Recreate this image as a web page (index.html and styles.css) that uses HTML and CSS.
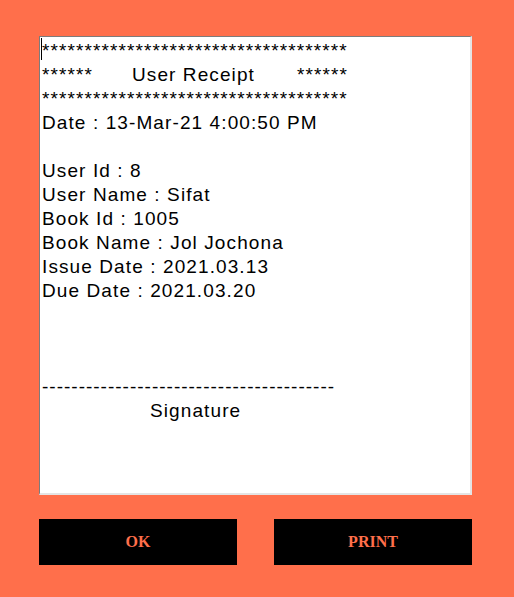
FILE: index.html
```html
<!DOCTYPE html>
<html>
<head>
<meta charset="utf-8">
<link rel="stylesheet" href="styles.css">
</head>
<body>
<div class="window">
  <div class="receipt">
    <span class="caret"></span>
    <div class="line">************************************</div>
    <div class="line"><span>******</span><span class="title">User Receipt</span><span class="right">******</span></div>
    <div class="line">************************************</div>
    <div class="line">Date : 13-Mar-21 4:00:50 PM</div>
    <div class="line"> </div>
    <div class="line">User Id : 8</div>
    <div class="line">User Name : Sifat</div>
    <div class="line">Book Id : 1005</div>
    <div class="line">Book Name : Jol Jochona</div>
    <div class="line">Issue Date : 2021.03.13</div>
    <div class="line">Due Date : 2021.03.20</div>
    <div class="line"> </div>
    <div class="line"> </div>
    <div class="line"> </div>
    <div class="line dash">----------------------------------------</div>
    <div class="line sig">Signature</div>
  </div>
  <div class="buttons">
    <button class="btn">OK</button>
    <button class="btn">PRINT</button>
  </div>
</div>
</body>
</html>
```
FILE: styles.css
```css
html, body {
  margin: 0;
  padding: 0;
  background: #ff6f4b;
}
.window {
  width: 514px;
  height: 597px;
  box-sizing: border-box;
  padding: 36px 42px 0 39px;
  display: flex;
  flex-direction: column;
}
.receipt {
  position: relative;
  width: 433px;
  height: 459px;
  box-sizing: border-box;
  background: #fff;
  border-style: solid;
  border-width: 1px 2px 2px 1px;
  border-color: #7c7c7c #e4e4e4 #e4e4e4 #7c7c7c;
  padding: 2px 0 0 2px;
  font-family: "Liberation Sans", Arial, sans-serif;
  font-size: 19px;
  letter-spacing: 1.1px;
  line-height: 24px;
  color: #000;
  overflow: hidden;
}
.line {
  height: 24px;
  white-space: pre;
}
.title {
  margin-left: 39px;
}
.right {
  margin-left: 42px;
}
.dash {
  letter-spacing: 1px;
}
.sig {
  padding-left: 108px;
}
.caret {
  position: absolute;
  left: 1px;
  top: 1px;
  width: 1px;
  height: 22px;
  background: #000;
}
.buttons {
  margin-top: 24px;
  display: flex;
  gap: 37px;
}
.btn {
  width: 198px;
  height: 46px;
  border: none;
  background: #000;
  color: #ff6f4b;
  font-family: "Liberation Serif", "Times New Roman", serif;
  font-weight: bold;
  font-size: 16px;
  padding: 0;
  margin: 0;
}
```
